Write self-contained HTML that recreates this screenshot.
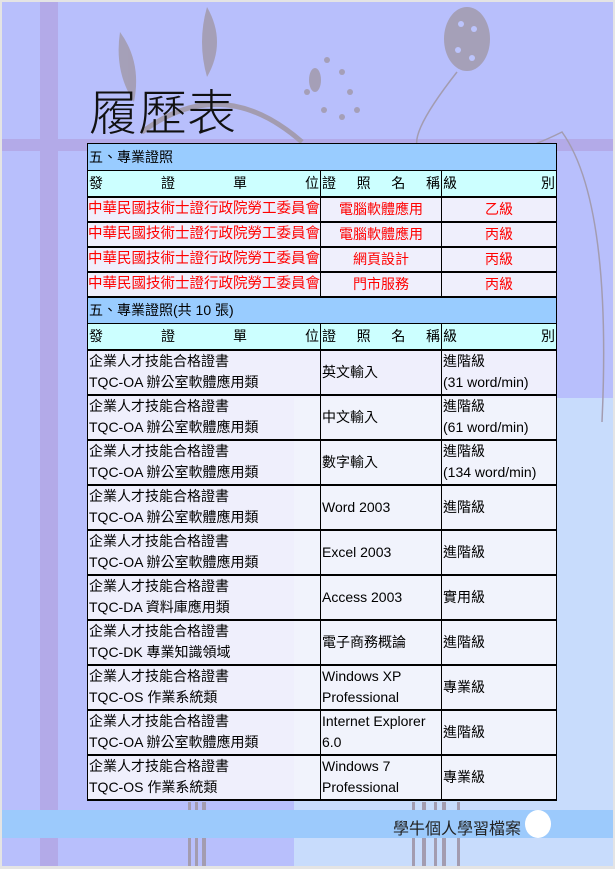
<!DOCTYPE html>
<html><head><meta charset="utf-8"><style>
*{margin:0;padding:0;box-sizing:border-box}
body{width:615px;height:869px;background:#e4e4e4;position:relative;overflow:hidden;font-family:"Liberation Sans","Noto Sans CJK TC",sans-serif}
.pg{position:absolute;left:2px;top:2px;width:611px;height:864px;background:#b8bffc;overflow:hidden}
.abs{position:absolute}
table{position:absolute;left:87px;top:143px;width:469px;border-collapse:collapse;font-size:14px;color:#000;table-layout:fixed}
td{border:1px solid #000;padding:0 1px;line-height:21px;vertical-align:middle;background:rgba(246,246,252,0.88);white-space:nowrap;overflow:hidden}
tr.sec td{background:#99ccff;height:27px;border-bottom:1px solid #000}
tr.hd td{background:#ccffff;height:26px;border-bottom:2px solid #000}
tr.r td{color:#f00;height:25px;text-align:center;border-bottom:2px solid #000}
tr.r td:first-child{text-align:left;padding:0;font-size:14.5px}
tr.n td{height:45px;border-bottom:2px solid #000}
.j{display:flex;justify-content:space-between}
</style></head><body>
<div class="pg">
 <div class="abs" style="left:38px;top:0;width:18px;height:864px;background:#b3aae8"></div>
 <div class="abs" style="left:0;top:137px;width:611px;height:12px;background:#b3aae8"></div>
 <div class="abs" style="left:292px;top:396px;width:319px;height:468px;background:#c8dcfc"></div>
 <svg class="abs" style="left:0;top:0" width="611" height="864">
  <g fill="#a39cb0" opacity="0.9">
   <ellipse cx="465" cy="37" rx="23" ry="32"/>
   <ellipse cx="313" cy="78" rx="6" ry="12"/>
   <circle cx="325" cy="58" r="3"/><circle cx="340" cy="70" r="3"/><circle cx="348" cy="90" r="3"/><circle cx="355" cy="108" r="3"/><circle cx="305" cy="90" r="3"/><circle cx="322" cy="108" r="3"/><circle cx="340" cy="115" r="3"/>
   <path d="M205 5 Q225 40 205 75 Q195 40 205 5Z"/>
   <path d="M118 30 Q140 60 132 100 Q112 70 118 30Z"/>
  </g>
  <g fill="#bcc4fc"><circle cx="459" cy="22" r="3"/><circle cx="472" cy="27" r="3"/><circle cx="456" cy="48" r="3"/><circle cx="470" cy="56" r="3"/></g>
  <path d="M455 70 Q400 140 420 150 Q480 170 560 130 Q610 200 600 420" stroke="#a39cb0" stroke-width="1.5" fill="none"/>
  <path d="M140 130 Q220 70 300 140" stroke="#a39cb0" stroke-width="5" fill="none"/>
  <g fill="#a39cb0"><rect x="186" y="800" width="3" height="64"/><rect x="193" y="800" width="3" height="64"/><rect x="200" y="800" width="4" height="64"/><rect x="410" y="800" width="3" height="64"/><rect x="420" y="800" width="4" height="64"/><rect x="432" y="800" width="3" height="64"/><rect x="440" y="800" width="4" height="64"/><rect x="455" y="800" width="3" height="64"/></g>
 </svg>
 <div class="abs" style="left:0;top:808px;width:611px;height:28px;background:#9ccafc"></div>
 <div class="abs" style="left:391px;top:813px;font-size:16px;color:#222;white-space:nowrap">學牛個人學習檔案</div>
 <div class="abs" style="left:523px;top:808px;width:26px;height:28px;border-radius:50%;background:#fff"></div>
 <div class="abs" style="left:87px;top:78px;font-size:49px;color:#111;line-height:60px;font-family:'Noto Sans CJK TC',sans-serif;font-weight:300">履歷表</div>
</div>
<table>
<colgroup><col style="width:233px"><col style="width:121px"><col style="width:115px"></colgroup>
<tr class="sec"><td colspan="3">五、專業證照</td></tr>
<tr class="hd"><td><div class="j"><span>發</span><span>證</span><span>單</span><span>位</span></div></td><td><div class="j"><span>證</span><span>照</span><span>名</span><span>稱</span></div></td><td><div class="j"><span>級</span><span>別</span></div></td></tr>
<tr class="r"><td>中華民國技術士證行政院勞工委員會</td><td>電腦軟體應用</td><td>乙級</td></tr>
<tr class="r"><td>中華民國技術士證行政院勞工委員會</td><td>電腦軟體應用</td><td>丙級</td></tr>
<tr class="r"><td>中華民國技術士證行政院勞工委員會</td><td>網頁設計</td><td>丙級</td></tr>
<tr class="r"><td>中華民國技術士證行政院勞工委員會</td><td>門市服務</td><td>丙級</td></tr>
<tr class="sec"><td colspan="3">五、專業證照(共 10 張)</td></tr>
<tr class="hd"><td><div class="j"><span>發</span><span>證</span><span>單</span><span>位</span></div></td><td><div class="j"><span>證</span><span>照</span><span>名</span><span>稱</span></div></td><td><div class="j"><span>級</span><span>別</span></div></td></tr>
<tr class="n"><td>企業人才技能合格證書<br>TQC-OA 辦公室軟體應用類</td><td>英文輸入</td><td>進階級<br>(31 word/min)</td></tr>
<tr class="n"><td>企業人才技能合格證書<br>TQC-OA 辦公室軟體應用類</td><td>中文輸入</td><td>進階級<br>(61 word/min)</td></tr>
<tr class="n"><td>企業人才技能合格證書<br>TQC-OA 辦公室軟體應用類</td><td>數字輸入</td><td>進階級<br>(134 word/min)</td></tr>
<tr class="n"><td>企業人才技能合格證書<br>TQC-OA 辦公室軟體應用類</td><td>Word 2003</td><td>進階級</td></tr>
<tr class="n"><td>企業人才技能合格證書<br>TQC-OA 辦公室軟體應用類</td><td>Excel 2003</td><td>進階級</td></tr>
<tr class="n"><td>企業人才技能合格證書<br>TQC-DA 資料庫應用類</td><td>Access 2003</td><td>實用級</td></tr>
<tr class="n"><td>企業人才技能合格證書<br>TQC-DK 專業知識領域</td><td>電子商務概論</td><td>進階級</td></tr>
<tr class="n"><td>企業人才技能合格證書<br>TQC-OS 作業系統類</td><td>Windows XP<br>Professional</td><td>專業級</td></tr>
<tr class="n"><td>企業人才技能合格證書<br>TQC-OA 辦公室軟體應用類</td><td>Internet Explorer<br>6.0</td><td>進階級</td></tr>
<tr class="n"><td>企業人才技能合格證書<br>TQC-OS 作業系統類</td><td>Windows 7<br>Professional</td><td>專業級</td></tr>
</table>
</body></html>
